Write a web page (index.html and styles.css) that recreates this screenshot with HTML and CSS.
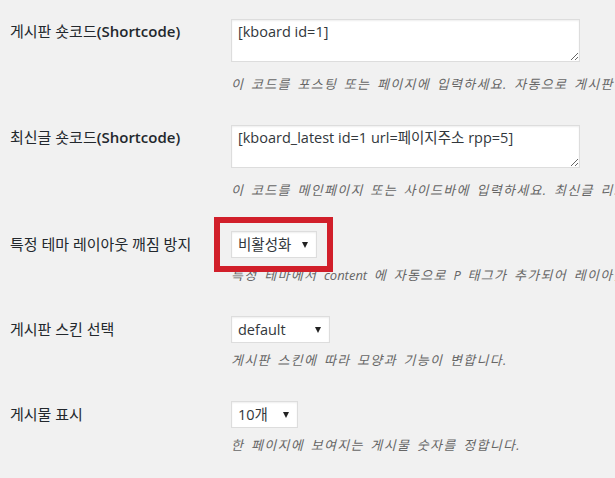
FILE: index.html
```
<!DOCTYPE html>
<html lang="ko">
<head>
    <meta charset="utf-8">
    <title>KBoard 설정</title>
    <link rel="stylesheet" href="styles.css">
</head>
<body>
    <div class="form-table">
        <!-- 게시판 숏코드 -->
        <div class="row row-text">
            <div class="label">게시판 숏코드<span class="en">(Shortcode)</span></div>
            <div class="field">
                <textarea class="code" readonly>[kboard id=1]</textarea>
                <p class="description">이 코드를 포스팅 또는 페이지에 입력하세요. 자동으로 게시판이 생성됩니다.</p>
            </div>
        </div>

        <!-- 최신글 숏코드 -->
        <div class="row row-text">
            <div class="label">최신글 숏코드<span class="en">(Shortcode)</span></div>
            <div class="field">
                <textarea class="code" readonly>[kboard_latest id=1 url=페이지주소 rpp=5]</textarea>
                <p class="description">이 코드를 메인페이지 또는 사이드바에 입력하세요. 최신글 리스트가 생성됩니다.</p>
            </div>
        </div>

        <!-- 레이아웃 깨짐 방지 -->
        <div class="row row-select">
            <div class="label">특정 테마 레이아웃 깨짐 방지</div>
            <div class="field">
                <span class="select">
                    <select class="select-off">
                        <option>비활성화</option>
                        <option>활성화</option>
                    </select>
                    <span class="mark"></span>
                </span>
                <p class="description">특정 테마에서 <span class="lat">content</span> 에 자동으로 <span class="lat">P</span> 태그가 추가되어 레이아웃이 깨지는 현상을 방지합니다.</p>
            </div>
        </div>

        <!-- 스킨 -->
        <div class="row row-select">
            <div class="label">게시판 스킨 선택</div>
            <div class="field">
                <span class="select">
                    <select class="select-skin">
                        <option>default</option>
                    </select>
                </span>
                <p class="description">게시판 스킨에 따라 모양과 기능이 변합니다.</p>
            </div>
        </div>

        <!-- 게시물 수 -->
        <div class="row row-select">
            <div class="label">게시물 표시</div>
            <div class="field">
                <span class="select">
                    <select class="select-rpp">
                        <option>10개</option>
                        <option>20개</option>
                    </select>
                </span>
                <p class="description">한 페이지에 보여지는 게시물 숫자를 정합니다.</p>
            </div>
        </div>
    </div>
</body>
</html>
```

FILE: styles.css
```
body {
    margin: 0;
    background: #f1f1f1;
    color: #23282d;
    font-family: "Open Sans", "Noto Sans CJK KR", sans-serif;
    font-size: 15px;
    overflow: hidden;
}

.form-table {
    padding: 19px 0 0 10px;
}

.row {
    display: grid;
    grid-template-columns: 221px auto;
}

.row + .row {
    margin-top: 31px;
}

.label {
    white-space: nowrap;
}

.row-text .label {
    line-height: 20px;
    padding-top: 2px;
}

.row-select .label {
    line-height: 27px;
}

.en {
    font-weight: 600;
}

.field {
    min-width: 0;
}

.code {
    display: block;
    box-sizing: border-box;
    width: 349px;
    height: 43px;
    margin: 0;
    padding: 2px 6px;
    border: 1px solid #ddd;
    background: #fff;
    box-shadow: inset 0 1px 2px rgba(0,0,0,0.07);
    color: #32373c;
    font-family: "Open Sans", "Noto Sans CJK KR", sans-serif;
    font-size: 14.5px;
    line-height: 20px;
    outline: none;
}

.description {
    margin: 7px 0 0;
    color: #666;
    font-size: 13px;
    font-style: italic;
    line-height: 20px;
    letter-spacing: 1.3px;
    word-spacing: 2px;
    white-space: nowrap;
}

.description .lat {
    letter-spacing: 0;
}

.row-text .description {
    margin-top: 12px;
}

.select {
    position: relative;
    display: block;
    width: max-content;
}

.select select {
    display: block;
    box-sizing: border-box;
    height: 27px;
    margin: 0;
    padding: 0 0 0 6px;
    border: 1px solid #ddd;
    border-radius: 0;
    background: #fff;
    box-shadow: inset 0 1px 2px rgba(0,0,0,0.07);
    color: #32373c;
    font-family: "Open Sans", "Noto Sans CJK KR", sans-serif;
    font-size: 14.5px;
    appearance: none;
    -webkit-appearance: none;
    outline: none;
}

.select::after {
    content: "";
    position: absolute;
    right: 9px;
    top: 11px;
    border-left: 3px solid transparent;
    border-right: 3px solid transparent;
    border-top: 6px solid #222;
    pointer-events: none;
}

.select-off {
    width: 86px;
}

.select-skin {
    width: 99px;
}

.select-rpp {
    width: 67px;
}

/* red highlight drawn over the screenshot */
.mark {
    position: absolute;
    left: -17px;
    top: -14px;
    width: 119px;
    height: 55px;
    box-sizing: border-box;
    border: 6px solid #d11f2a;
    pointer-events: none;
    z-index: 2;
}
```
